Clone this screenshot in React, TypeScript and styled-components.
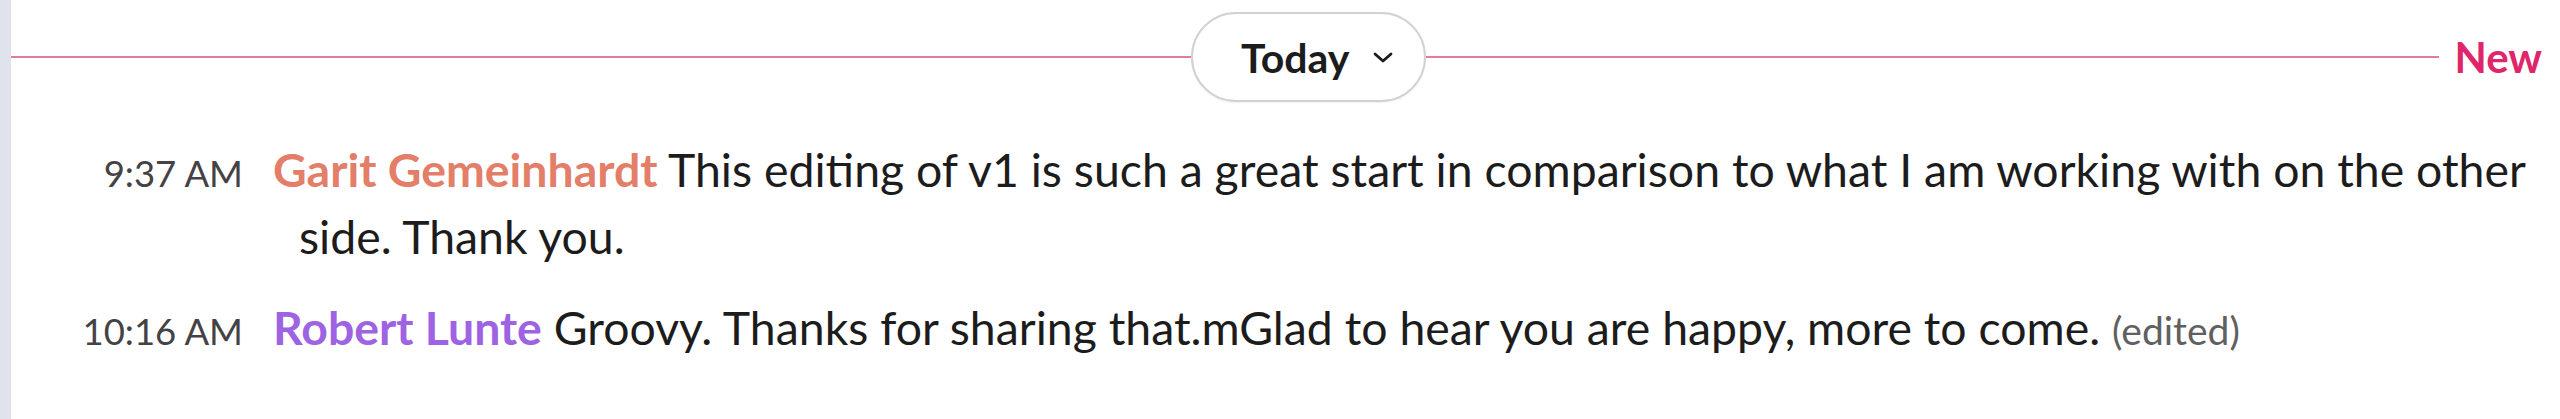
import React from "react";
import styled, { createGlobalStyle } from "styled-components";

const GlobalStyle = createGlobalStyle`
    html, body {
        margin: 0;
        padding: 0;
        background: #ffffff;
    }
    body {
        font-family: Lato, "Noto Sans", sans-serif;
        color: #1d1c1d;
    }
`;

const Page = styled.div`
    display: flex;
    width: 2560px;
    height: 419px;
    overflow: hidden;
`;

const SideStrip = styled.div`
    flex: 0 0 11px;
    background-color: #e1e3ec;
`;

const Main = styled.div`
    flex: 1;
    display: flex;
    flex-direction: column;
`;

const DayDivider = styled.div`
    display: flex;
    align-items: center;
    padding-top: 12px;
    padding-right: 18px;
`;

const Rule = styled.div<{ $basis?: number }>`
    flex: ${({ $basis }) => ($basis ? `0 0 ${$basis}px` : "1")};
    height: 2px;
    background-color: #e27aa6;
`;

const DayPill = styled.button`
    box-sizing: border-box;
    width: 235px;
    height: 90px;
    display: flex;
    align-items: center;
    padding: 0 36px 0 48px;
    gap: 24px;

    border: 2px solid #d2d2d2;
    border-radius: 45px;
    background: #ffffff;
    box-shadow: 0 1px 2px rgba(0, 0, 0, 0.06);

    font-family: Lato, sans-serif;
    font-weight: 700;
    font-size: 41px;
    color: #1d1c1d;
`;

const NewLabel = styled.span`
    margin-left: 15px;
    font-weight: 700;
    font-size: 42px;
    color: #e0266a;
`;

const MessageList = styled.div`
    display: flex;
    flex-direction: column;
    gap: 24px;
    padding-top: 34px;
`;

const MessageRow = styled.div`
    display: flex;
    align-items: baseline;
    padding-right: 12px;
`;

const Time = styled.span`
    flex: 0 0 232px;
    text-align: right;
    margin-right: 30px;
    font-size: 36.5px;
    color: #454245;
`;

const Body = styled.div`
    flex: 1;
    padding-left: 26px;
    text-indent: -26px;
    font-size: 46.4px;
    line-height: 67px;
`;

const Author = styled.span<{ $color: string }>`
    font-weight: 700;
    color: ${({ $color }) => $color};
`;

const Edited = styled.span`
    font-size: 39px;
    color: #616061;
`;

function Chevron() {
    return (
        <svg width="20" height="11" viewBox="0 0 20 11" fill="none" style={{ flexShrink: 0 }}>
            <path d="M2 2 L10 9 L18 2" stroke="#1d1c1d" strokeWidth="2.8" strokeLinecap="round" strokeLinejoin="round" />
        </svg>
    );
}

interface Message {
    time: string;
    author: string;
    color: string;
    text: string;
    edited?: boolean;
}

const messages: Message[] = [
    {
        time: "9:37 AM",
        author: "Garit Gemeinhardt",
        color: "#e37e69",
        text: "This editing of v1 is such a great start in comparison to what I am working with on the other side. Thank you.",
    },
    {
        time: "10:16 AM",
        author: "Robert Lunte",
        color: "#9d63e2",
        text: "Groovy. Thanks for sharing that.mGlad to hear you are happy, more to come.",
        edited: true,
    },
];

export default function App() {
    return (
        <>
            <GlobalStyle />
            <Page>
                <SideStrip />
                <Main>
                    <DayDivider>
                        <Rule $basis={1180} />
                        <DayPill>
                            Today
                            <Chevron />
                        </DayPill>
                        <Rule />
                        <NewLabel>New</NewLabel>
                    </DayDivider>
                    <MessageList>
                        {messages.map((m) => (
                            <MessageRow key={m.time}>
                                <Time>{m.time}</Time>
                                <Body>
                                    <Author $color={m.color}>{m.author}</Author> {m.text}
                                    {m.edited && <> <Edited>(edited)</Edited></>}
                                </Body>
                            </MessageRow>
                        ))}
                    </MessageList>
                </Main>
            </Page>
        </>
    );
}
